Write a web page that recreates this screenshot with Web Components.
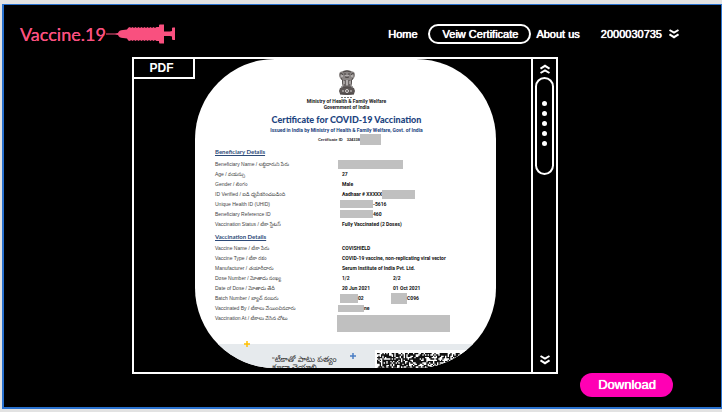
<!DOCTYPE html>
<html lang="en">
<head>
<meta charset="utf-8">
<title>Vaccine.19</title>
<style>
  body { margin: 0; background: #e2e2e2; font-family: "Liberation Sans", Arial, sans-serif; }
</style>
</head>
<body>
<app-shell>
  <site-header slot="header"></site-header>
  <doc-viewer label="PDF"><vaccine-certificate></vaccine-certificate></doc-viewer>
  <download-button slot="footer">Download</download-button>
</app-shell>

<script>
const define = (name, html, setup) => {
  const template = document.createElement('template');
  template.innerHTML = '<style>:host,*{box-sizing:border-box}</style>' + html;
  customElements.define(name, class extends HTMLElement {
    constructor() {
      super();
      this.attachShadow({ mode: 'open' }).append(template.content.cloneNode(true));
    }
    connectedCallback() { if (setup) setup(this, this.shadowRoot); }
  });
};

define('double-chevron', `
<style>
  :host { display: block; width: 10px; height: 10px; }
  :host([up]) { transform: rotate(180deg); }
  svg { display: block; }
</style>
<svg width="10" height="10" viewBox="0 0 10 10" fill="none" stroke="#fff" stroke-width="2">
  <path d="M0.5 1 L5 3.7 L9.5 1 M0.5 5.3 L5 8.2 L9.5 5.3"/>
</svg>`);

define('app-shell', `
<style>
  :host { display: block; padding: 4px 0 3px 2px; }
  .frame { display: flex; flex-direction: column; background: #000; color: #fff; min-height: 405px;
    border: solid #2a72cf; border-width: 1px 1px 2px 2px; }
  main { padding: 0 163px 0 128px; }
  footer { display: flex; justify-content: flex-end; padding-right: 48px; margin-top: -1px; }
</style>
<div class="frame">
  <slot name="header"></slot>
  <main><slot></slot></main>
  <footer><slot name="footer"></slot></footer>
</div>`);

define('brand-logo', `
<style>
  :host { display: block; }
  a { display: flex; align-items: center; color: #f9507f; text-decoration: none;
    font: 18px/22px Lato, sans-serif; text-shadow: 0 0 0 #f9507f; }
  svg { display: block; }
</style>
<a href="#">Vaccine.19
  <svg width="70" height="20" viewBox="0 0 70 20" fill="#f9507f" aria-hidden="true">
    <path d="M0 9.5H9L12 9Q13 6 17 6L21 5.5Q22 3 24 3L25 4 26.5 3 28 4 29.5 3 31 4 32.500 3 34 4 35.500 3 37 4 38.500 3 40 4 41.500 3 43 4 44.500 3 46 4 47.500 3 49 4 50.500 3H53V1.500Q53 0.500 54 0.500H58V7.500H64L66 7V4Q66 3.500 67 3.500H69V16H67Q66 16 66 15V12.500L64 12H58V19.500H54Q53 19.500 53 18V17H50.500L49 16 47.500 17 46 16 44.500 17 43 16 41.500 17 40 16 38.500 17 37 16 35.500 17 34 16 32.500 17 31 16 29.500 17 28 16 26.500 17 25 16 24 17Q22 17 21 14.500L17 14Q13 14 12 11L9 10.500H0Z"/>
  </svg>
</a>`);

define('site-header', `
<style>
  :host { display: flex; align-items: center; justify-content: space-between; height: 52px; padding: 6px 42px 0 16px; }
  nav { display: flex; align-items: center; font-size: 11px; line-height: 16px; text-shadow: 0 0 0 #fff, 0 0 1px #fff; }
  a { color: #fff; text-decoration: none; white-space: nowrap; }
  .on { border: 2px solid #fff; border-radius: 10px; padding: 0 11px 0 13px; margin: 0 5px 0 10px; }
  button { display: flex; align-items: center; gap: 7px; margin-left: 21px; padding: 0; border: 0; background: none;
    color: #fff; font: inherit; text-shadow: inherit; }
</style>
<brand-logo></brand-logo>
<nav>
  <a href="#home">Home</a>
  <a class="on" href="#certificate" aria-current="page">Veiw Certificate</a>
  <a href="#about">About us</a>
  <button type="button">2000030735<double-chevron></double-chevron></button>
</nav>`);

define('scroll-rail', `
<style>
  :host { display: flex; flex-direction: column; align-items: center; padding: 5px 0 7px;
    border-left: 2px solid #fff; }
  button { padding: 0; border: 0; background: none; }
  .thumb { display: flex; flex-direction: column; align-items: center; justify-content: center; gap: 5px;
    width: 19px; height: 98px; margin: 3px 0 auto; padding-bottom: 6px; border: 2px solid #fff; border-radius: 10px; }
  i { width: 5px; height: 5px; border-radius: 50%; background: #fff; }
</style>
<button type="button" aria-label="Scroll up"><double-chevron up></double-chevron></button>
<div class="thumb"><i></i><i></i><i></i><i></i><i></i></div>
<button type="button" aria-label="Scroll down"><double-chevron></double-chevron></button>`);

define('doc-viewer', `
<style>
  :host { display: grid; grid-template-columns: 1fr 25px; border: 2px solid #fff; }
  .pane { display: flex; align-items: flex-start; padding: 0 35px 4px 0; }
  .tab { flex: none; width: 61px; height: 20px; padding-right: 4px; border: solid #fff; border-width: 0 2px 2px 0;
    font: bold 12px/18px "Liberation Sans", sans-serif; text-align: center; }
  .page { flex: 1; min-width: 0; }
</style>
<div class="pane"><div class="tab"></div><div class="page"><slot></slot></div></div>
<scroll-rail></scroll-rail>`,
(host, root) => { root.querySelector('.tab').textContent = host.getAttribute('label'); });

define('ashoka-emblem', `
<style>:host { display: block; width: 18px; height: 28px; } svg { display: block; }</style>
<svg width="18" height="28" viewBox="0 0 18 28" aria-hidden="true">
  <path fill="#8a8584" d="M5 1Q9-1 13 1L16 2Q18 5 16 8L14 10 14 15 13 17H5L4 15 4 10 2 8Q0 5 2 2Z"/>
  <path fill="#5c5655" d="M2 18Q9 15 16 18L17 21 16 24Q9 26 2 24L1 21Z"/>
  <g fill="none" stroke="#4a4544" stroke-width="1">
    <path d="M5 2Q9 0 13 2M2 4Q4 2 5 5M16 4Q14 2 13 5M6 4H8M10 4H12M7 7Q9 8 11 7M3 8Q5 10 5 14M15 8Q13 10 13 14M7 10V16M11 10V16M3 17H15M2 24H16"/>
  </g>
  <g fill="none" stroke="#d8d4d3" stroke-width="1">
    <path d="M3 6H5M13 6H15M8 5V6M10 5V6M9 10V15M6 11V14M12 11V14M4 21H6M12 21H14"/><circle cx="9" cy="21" r="1.500"/>
  </g>
  <path stroke="#777" stroke-width="1" stroke-dasharray="2 1" d="M3 27.500H15"/>
</svg>`);

define('qr-code', `
<style>:host { display: block; margin-top: 6px; background: #fff; padding: 3px 2px; } svg { display: block; }</style>
<svg width="96" height="16" viewBox="0 0 72 12" role="img" aria-label="QR code"><path fill="#111"/></svg>`,
(host, root) => {
  let seed = 19, d = '';
  for (let y = 0; y < 12; y++) for (let x = 0; x < 72; x++) {
    seed = (seed * 1103515245 + 12345) % 2147483648;
    if ((seed >> 16) % 100 < 60) d += 'M' + x + ' ' + y + 'h1v1h-1z';
  }
  root.querySelector('path').setAttribute('d', d);
});

define('spark-mark', `
<style>:host { display: block; width: 6px; height: 6px; } svg { display: block; }</style>
<svg width="6" height="6" viewBox="0 0 6 6" fill="none" stroke="currentColor" stroke-width="1.500"><path d="M3 0V6M0 3H6"/></svg>`);

define('vaccine-certificate', `
<style>
  :host { display: flex; flex-direction: column; height: 309px; overflow: hidden; background: #fff; color: #222;
    border-radius: 80px; padding-top: 11px; font: 5px/10px "Liberation Sans", "Noto Sans Telugu", sans-serif; }
  header { display: flex; flex-direction: column; align-items: center; text-align: center; padding-left: 2px; }
  .ministry { font: bold 5px/6px Roboto, sans-serif; }
  h1 { margin: 4px 0 0; font: 900 9px/12px Lato, sans-serif; color: #1c4480; }
  h2 { margin: 0; font: bold 5px/8px Roboto, sans-serif; color: #1c4480; }
  .id { display: flex; align-items: center; gap: 4px; margin-left: 6px; font-size: 4px; font-weight: bold; }
  .id span { display: flex; align-items: center; }
  table { width: calc(100% - 20px); margin: 0 0 0 20px; border-spacing: 0; table-layout: fixed; }
  caption { padding: 3px 0; text-align: left; font: bold 6px/8px Lato, sans-serif; color: #2c4a78; text-decoration: underline; }
  .dose caption { padding: 4px 0 2px; }
  th, td { height: 10px; padding: 0; text-align: left; white-space: nowrap; vertical-align: middle; line-height: 10px; }
  th { width: 122px; font-weight: normal; color: #444; }
  td { font-weight: bold; font-family: Roboto, sans-serif; color: #111; }
  td > span { display: flex; align-items: center; height: 10px; padding-left: 5px; }
  .x { height: 9px; background: #c0c0c0; }
  .name { width: 65px; margin-left: -4px; } .aad { width: 33px; } .id .x { width: 21px; height: 11px; }
  .num { width: 33px; margin-left: -2px; height: 8px; } .bat { width: 18px; margin-left: -2px; }
  .bat2 { width: 16px; margin-left: -2px; height: 11px; } .by { width: 26px; margin-left: -4px; height: 7px; }
  .place { flex: none; width: 113px; height: 17px; margin: -8px 0 0 142px; }
  .band { display: flex; align-items: flex-start; flex: 1; margin-top: 12px; background: #e6eaed; color: #333; }
  .gold { color: #ffc000; margin: -3px 0 0 49px; }
  .blue { color: #4a7ec4; margin: 9px 19px 0 0; }
  .band p { margin: 12px 14px 0 22px; font-size: 8px; line-height: 8px; white-space: nowrap; width: 64px; }
</style>
<header>
  <ashoka-emblem></ashoka-emblem>
  <div class="ministry">Ministry of Health &amp; Family Welfare<br>Government of India</div>
  <h1>Certificate for COVID-19 Vaccination</h1>
  <h2>Issued in India by Ministry of Health &amp; Family Welfare, Govt. of India</h2>
  <div class="id"><span>Certificate ID</span><span>324338<i class="x"></i></span></div>
</header>
<table>
  <caption>Beneficiary Details</caption>
  <tr><th scope="row">Beneficiary Name / లబ్ధిదారుని పేరు</th><td><span><i class="x name"></i></span></td></tr>
  <tr><th scope="row">Age / వయస్సు</th><td><span>27</span></td></tr>
  <tr><th scope="row">Gender / లింగం</th><td><span>Male</span></td></tr>
  <tr><th scope="row">ID Verified / ఐడి ధృవీకరించబడింది</th><td><span>Aadhaar # XXXXX<i class="x aad"></i></span></td></tr>
  <tr><th scope="row">Unique Health ID (UHID)</th><td><span><i class="x num"></i>-5616</span></td></tr>
  <tr><th scope="row">Beneficiary Reference ID</th><td><span><i class="x num"></i>460</span></td></tr>
  <tr><th scope="row">Vaccination Status / టీకా స్టేటస్</th><td><span>Fully Vaccinated (2 Doses)</span></td></tr>
</table>
<table class="dose">
  <caption>Vaccination Details</caption>
  <colgroup><col style="width:122px"><col style="width:51px"><col></colgroup>
  <tr><th scope="row">Vaccine Name / టీకా పేరు</th><td colspan="2"><span>COVISHIELD</span></td></tr>
  <tr><th scope="row">Vaccine Type / టీకా రకం</th><td colspan="2"><span>COVID-19 vaccine, non-replicating viral vector</span></td></tr>
  <tr><th scope="row">Manufacturer / తయారీదారు</th><td colspan="2"><span>Serum Institute of India Pvt. Ltd.</span></td></tr>
  <tr><th scope="row">Dose Number / మోతాదు సంఖ్య</th><td><span>1/2</span></td><td><span>2/2</span></td></tr>
  <tr><th scope="row">Date of Dose / మోతాదు తేదీ</th><td><span>20 Jun 2021</span></td><td><span>01 Oct 2021</span></td></tr>
  <tr><th scope="row">Batch Number / బ్యాచ్ నంబరు</th><td><span><i class="x bat"></i>02</span></td><td><span><i class="x bat2"></i>C096</span></td></tr>
  <tr><th scope="row">Vaccinated By / టీకాలు వేయించినవారు</th><td colspan="2"><span><i class="x by"></i>ne</span></td></tr>
  <tr><th scope="row">Vaccination At / టీకాలు వేసిన చోటు</th><td colspan="2"><span></span></td></tr>
</table>
<div class="x place"></div>
<div class="band">
  <spark-mark class="gold"></spark-mark>
  <p lang="te">“టీకాతో పాటు పత్యం<br>కూడా చెయాలి</p>
  <spark-mark class="blue"></spark-mark>
  <qr-code></qr-code>
</div>`);

define('download-button', `
<style>
  :host { display: block; }
  button { height: 24px; padding: 0 17px 0 18px; border: 0; border-radius: 12px; background: #ff00b4; color: #fff;
    font: 13px/24px "Liberation Sans", Arial, sans-serif; text-shadow: 0 0 0 #fff, 0 0 1px #fff; }
</style>
<button type="button"><slot></slot></button>`);
</script>
</body>
</html>
